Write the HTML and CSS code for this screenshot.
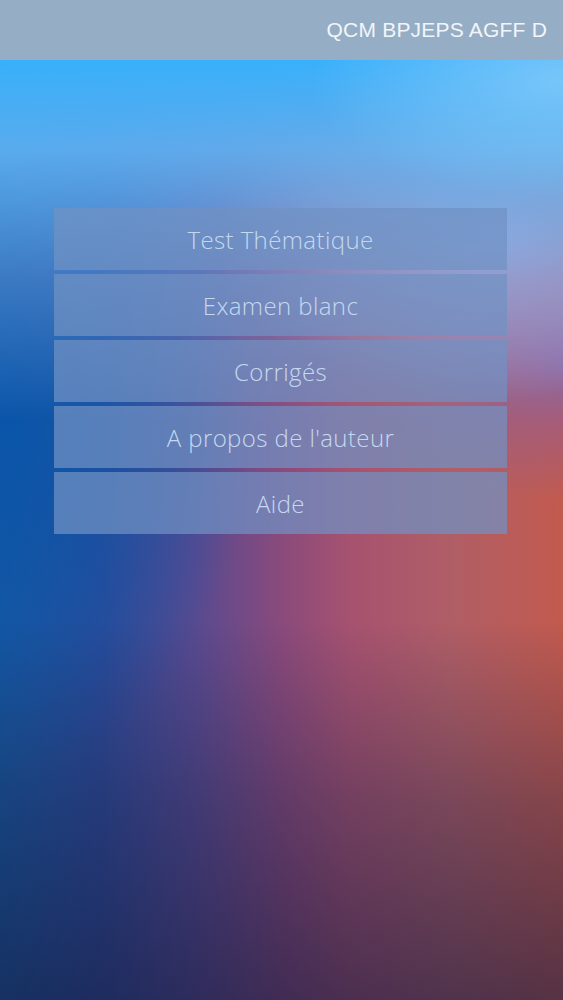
FILE: index.html
```html
<!DOCTYPE html>
<html>
<head>
    <title>QCM BPJEPS AGFF D</title>
    <link rel="stylesheet" href="styles.css">
</head>
<body>
    <div class="top-bar">
        <span class="app-title">QCM BPJEPS AGFF D</span>
    </div>
    <div class="menu">
        <div class="menu-item">Test Thématique</div>
        <div class="menu-item">Examen blanc</div>
        <div class="menu-item">Corrigés</div>
        <div class="menu-item">A propos de l'auteur</div>
        <div class="menu-item">Aide</div>
    </div>
</body>
</html>
```
FILE: styles.css
```css
html, body {
    margin: 0;
    height: 100%;
}

body {
    font-family: "Open Sans", "Liberation Sans", Arial, sans-serif;
    font-weight: 300;
    min-height: 1000px;
    background:
        radial-gradient(ellipse 45% 12% at 100% 8%, rgba(125, 200, 250, 0.9), rgba(125, 200, 250, 0)),
        linear-gradient(180deg, #38b0fb 60px, rgba(96, 180, 245, 0.9) 150px, rgba(110, 165, 230, 0.45) 280px, rgba(110, 160, 225, 0) 420px),
        radial-gradient(ellipse 50% 16% at 88% 24%, rgba(185, 170, 215, 0.9), rgba(185, 170, 215, 0)),
        radial-gradient(ellipse 35% 14% at 100% 36%, rgba(135, 95, 165, 0.85), rgba(135, 95, 165, 0)),
        linear-gradient(180deg, rgba(20, 28, 65, 0) 62%, rgba(20, 28, 65, 0.35) 80%, rgba(20, 25, 60, 0.62) 100%),
        radial-gradient(ellipse 45% 35% at 0% 42%, rgba(10, 85, 170, 1), rgba(10, 85, 170, 0)),
        linear-gradient(90deg, #1858a0 0%, #2e4a98 18%, #5a4a90 35%, #8a4a7c 50%, #a65270 62%, #b05e66 80%, #c25a4e 100%);
}

.top-bar {
    height: 60px;
    background-color: #95aec6;
    display: flex;
    align-items: center;
    justify-content: flex-end;
    padding-right: 16px;
}

.app-title {
    color: #f2f5f8;
    font-family: "Liberation Sans", Arial, sans-serif;
    font-size: 21px;
    font-weight: 400;
    letter-spacing: 0.2px;
}

.menu {
    display: flex;
    flex-direction: column;
    gap: 4px;
    margin: 148px 56px 0 54px;
}

.menu-item {
    height: 62px;
    display: flex;
    align-items: center;
    justify-content: center;
    background-color: rgba(112, 146, 195, 0.72);
    color: #c4d9f0;
    font-size: 24px;
    letter-spacing: 0.4px;
}
```
